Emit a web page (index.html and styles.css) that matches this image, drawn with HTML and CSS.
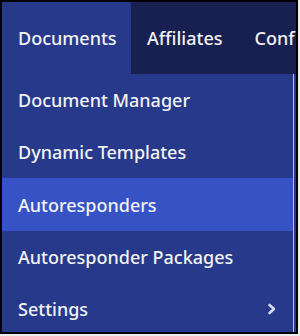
FILE: index.html
```html
<!DOCTYPE html>
<html lang="en">
<head>
  <meta charset="UTF-8">
  <title>Documents menu</title>
  <link rel="stylesheet" href="styles.css">
</head>
<body>
  <div class="frame">
    <div class="topbar">
      <div class="tab active">Documents</div>
      <div class="tab">Affiliates</div>
      <div class="tab">Conf</div>
    </div>
    <ul class="menu">
      <li class="item">Document Manager</li>
      <li class="item">Dynamic Templates</li>
      <li class="item selected">Autoresponders</li>
      <li class="item">Autoresponder Packages</li>
      <li class="item">
        <span>Settings</span>
        <svg class="chev" width="10" height="12" viewBox="0 0 10 12">
          <path d="M2.5 2 L7 6 L2.5 10" fill="none" stroke="#d8dcef" stroke-width="2.6" stroke-linecap="round" stroke-linejoin="round"/>
        </svg>
      </li>
    </ul>
  </div>
</body>
</html>
```

FILE: styles.css
```css
body {
  margin: 0;
  background-color: #eeeeee;
  font-family: "Noto Sans", "Open Sans", sans-serif;
}
.frame {
  width: 298px;
  height: 334px;
  border: 2px solid #000000;
  box-sizing: border-box;
  background-color: #26398a;
  overflow: hidden;
}
.topbar {
  display: flex;
  height: 72px;
  background-color: #172050;
  white-space: nowrap;
  overflow: hidden;
}
.tab {
  display: flex;
  align-items: center;
  flex-shrink: 0;
  padding: 0 16px;
  color: #f2f2f2;
  font-size: 18px;
  font-weight: 500;
}
.tab.active {
  background-color: #26398a;
  width: 129px;
  box-sizing: border-box;
}
.menu {
  list-style: none;
  margin: 0;
  padding: 0;
  border-right: 1px solid #b9c1e6;
  margin-right: 2px;
}
.item {
  display: flex;
  align-items: center;
  justify-content: space-between;
  height: 52px;
  padding: 0 16px;
  color: #f2f2f2;
  font-size: 18px;
  font-weight: 500;
}
.item.selected {
  background-color: #3652c4;
  height: 53px;
}
```
